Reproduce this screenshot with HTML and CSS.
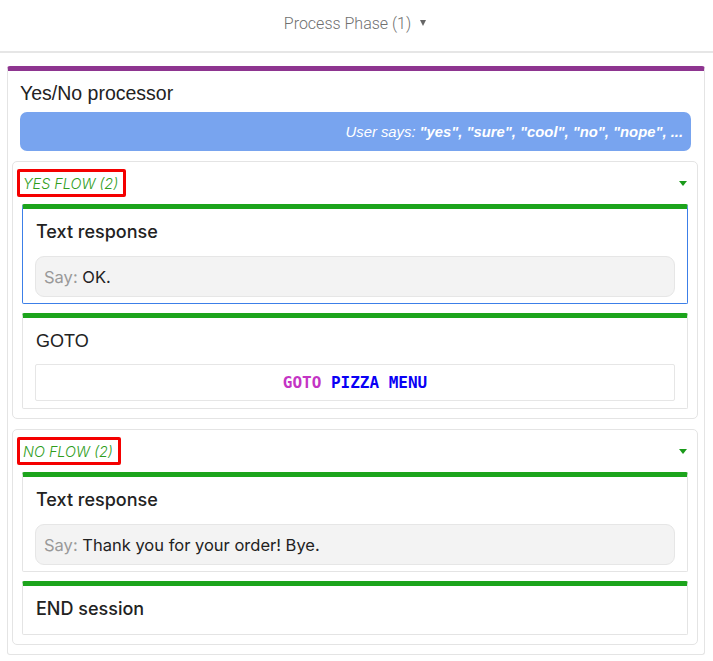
FILE: index.html
```html
<!DOCTYPE html>
<html lang="en">
<head>
<meta charset="utf-8">
<title>Process Phase</title>
<link rel="stylesheet" href="styles.css">
</head>
<body>
<header class="topbar">
  <span class="phase">Process Phase (1)</span>
  <span class="caret"></span>
</header>

<main class="proc-card">
  <div class="proc-head">
    <h1 class="proc-title">Yes/No processor</h1>
    <div class="says"><span>User says: <b>"yes", "sure", "cool", "no", "nope", ...</b></span></div>
  </div>

  <div class="flows">
    <section class="flow">
      <div class="flow-head">
        <span class="flow-label">YES FLOW (2)</span>
        <span class="flow-caret"></span>
      </div>
      <div class="step step-active">
        <h2 class="step-title">Text response</h2>
        <div class="say-box"><span><span class="say-key">Say:</span> OK.</span></div>
      </div>
      <div class="step">
        <h2 class="step-title step-title-plain">GOTO</h2>
        <div class="goto-box"><span><span class="kw">GOTO</span> <span class="target">PIZZA MENU</span></span></div>
      </div>
    </section>

    <section class="flow">
      <div class="flow-head">
        <span class="flow-label">NO FLOW (2)</span>
        <span class="flow-caret"></span>
      </div>
      <div class="step">
        <h2 class="step-title">Text response</h2>
        <div class="say-box"><span><span class="say-key">Say:</span> Thank you for your order! Bye.</span></div>
      </div>
      <div class="step step-end">
        <h2 class="step-title">END session</h2>
      </div>
    </section>
  </div>
</main>
</body>
</html>
```

FILE: styles.css
```css
* { box-sizing: border-box; }

body {
  margin: 0;
  background: #fff;
  font-family: "Liberation Sans", Arial, sans-serif;
  color: #222;
}

.topbar {
  height: 53px;
  border-bottom: 2px solid #e6e6e6;
  display: flex;
  align-items: center;
  justify-content: center;
  gap: 9px;
  padding-bottom: 4px;
  padding-right: 3px;
}

.phase {
  font-family: Roboto, sans-serif;
  font-weight: 300;
  font-size: 16px;
  color: #6f6f6f;
}

.caret {
  width: 0;
  height: 0;
  border-left: 3.5px solid transparent;
  border-right: 3.5px solid transparent;
  border-top: 6px solid #666;
  margin-top: -2px;
}

.proc-card {
  margin: 13px 8px 0 7px;
  border: 1px solid #e4e4e4;
  border-top: 5px solid #8e3590;
  border-radius: 3px;
  padding-bottom: 9px;
}

.proc-head {
  padding: 12px 13px 10px 12px;
}

.proc-title {
  margin: 0 0 8px;
  font-size: 19.5px;
  line-height: 21px;
  font-weight: 400;
  color: #222;
}

.says {
  height: 39px;
  background: #78a4ef;
  border-radius: 7px;
  color: #fff;
  font-style: italic;
  font-size: 14.8px;
  display: flex;
  align-items: center;
  justify-content: flex-end;
  padding-right: 8px;
  white-space: pre;
}

.says b { font-weight: 700; }

.flows {
  display: flex;
  flex-direction: column;
  gap: 10px;
  padding: 0 6px 0 4px;
}

.flow {
  border: 1px solid #e4e4e4;
  border-radius: 5px;
  padding: 7px 9px 9px 9px;
  display: flex;
  flex-direction: column;
  gap: 9px;
}

.flow-head {
  display: flex;
  align-items: center;
  justify-content: space-between;
  margin-left: -5px;
  margin-bottom: -2px;
}

.flow-label {
  border: 3px solid #f40000;
  border-radius: 2px;
  padding: 0 5px 0 3px;
  height: 28px;
  display: flex;
  align-items: center;
  font-family: Inter, "Noto Sans", sans-serif;
  font-style: italic;
  font-weight: 300;
  font-size: 14.4px;
  color: #2f9d1c;
}

.flow-caret {
  width: 0;
  height: 0;
  border-left: 4px solid transparent;
  border-right: 4px solid transparent;
  border-top: 5px solid #1a9a1a;
  margin-right: 1px;
}

.step {
  border: 1px solid #e4e4e4;
  border-top: 5px solid #1ca41c;
  border-radius: 2px;
  padding: 13px 12px 6px 12px;
}

.step-active {
  border-color: #3c7fe8;
  border-top-color: #1ca41c;
}

.step-title {
  margin: 0 0 14px;
  font-family: Inter, "Noto Sans", sans-serif;
  font-weight: 500;
  font-size: 18px;
  line-height: 20px;
  color: #222;
  padding-left: 1px;
}

.step-end .step-title { margin-bottom: 0; padding-bottom: 9px; }

.step-title-plain {
  font-family: "Liberation Sans", Arial, sans-serif;
  font-weight: 400;
  margin-bottom: 13px;
}

.say-box {
  height: 41px;
  background: #f3f3f3;
  border: 1px solid #e6e6e6;
  border-radius: 9px;
  display: flex;
  align-items: center;
  padding-left: 8px;
  font-family: Inter, "Noto Sans", sans-serif;
  font-size: 16.5px;
  color: #222;
  white-space: pre;
}

.say-key { color: #999; }

.goto-box {
  height: 37px;
  border: 1px solid #e6e6e6;
  border-radius: 2px;
  display: flex;
  align-items: center;
  justify-content: center;
  font-family: "DejaVu Sans Mono", monospace;
  font-weight: 700;
  font-size: 16px;
  white-space: pre;
  margin-bottom: 1px;
}

.kw { color: #c434c4; }
.target { color: #0a00f5; }
```
